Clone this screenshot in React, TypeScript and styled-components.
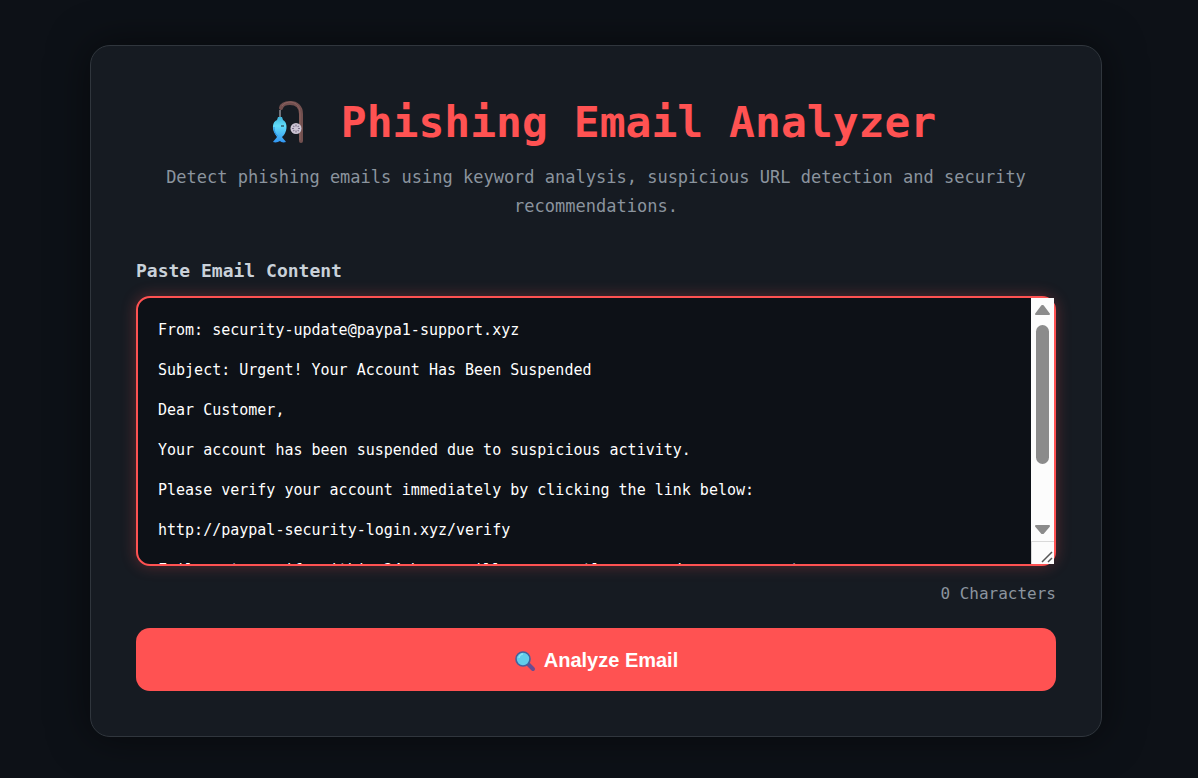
import React, { useState } from "react";
import styled, { createGlobalStyle } from "styled-components";

const GlobalStyle = createGlobalStyle`
  * { box-sizing: border-box; }
  body {
    margin: 0;
    min-height: 100vh;
    background: #0d1117;
    color: #c9d1d9;
    font-family: "DejaVu Sans Mono", "Liberation Mono", monospace;
  }
`;

const Page = styled.main`
  display: flex;
  justify-content: center;
  min-height: 100vh;
  padding: 45px 96px 41px 90px;
`;

const Card = styled.section`
  width: 100%;
  max-width: 1100px;
  padding: 46px 45px 45px;
  background: #161b22;
  border: 1px solid #30363d;
  border-radius: 20px;
  box-shadow: 0 0 40px rgba(0, 0, 0, 0.5);
`;

const Title = styled.h1`
  display: flex;
  align-items: center;
  justify-content: center;
  gap: 32px;
  margin: 0 0 11px;
  color: #ff5252;
  font-size: 43px;
  line-height: 60px;
`;

const Subtitle = styled.p`
  margin: 0 0 36px;
  color: #8b949e;
  font-size: 17px;
  line-height: 29px;
  text-align: center;
`;

const Form = styled.form`
  display: flex;
  flex-direction: column;
`;

const Label = styled.label`
  margin-bottom: 11px;
  font-size: 18px;
  font-weight: 700;
  line-height: 28px;
`;

const Field = styled.div`
  display: flex;
  height: 270px;
  border: 2px solid #ff5252;
  border-radius: 14px;
  background: #0d1117;
  box-shadow: 0 0 15px rgba(255, 82, 82, 0.3);
`;

const EmailInput = styled.textarea`
  flex: 1;
  min-width: 0;
  padding: 22px 20px 0;
  border: 0;
  border-radius: 12px;
  outline: 0;
  resize: none;
  background: transparent;
  color: #fff;
  font-family: inherit;
  font-size: 15px;
  line-height: 20px;
  scrollbar-width: none;
`;

const ScrollBar = styled.div`
  display: flex;
  flex-direction: column;
  align-items: center;
  width: 23px;
  background: #fcfcfc;
`;

const Thumb = styled.div`
  width: 13px;
  height: 139px;
  margin-bottom: auto;
  border-radius: 7px;
  background: #8b8b8b;
`;

const Grip = styled.div`
  width: 23px;
  height: 23px;
  border: solid #d9d9d9;
  border-width: 1px 0 0 1px;
`;

const Counter = styled.output`
  margin: 14px 0 21px;
  color: #8b949e;
  font-size: 16px;
  line-height: 27px;
  text-align: right;
`;

const AnalyzeButton = styled.button`
  display: flex;
  align-items: center;
  justify-content: center;
  gap: 8px;
  height: 63px;
  padding: 2px 0 0;
  border: 0;
  border-radius: 14px;
  background: #ff5252;
  color: #fff;
  font-family: "Liberation Sans", Arial, sans-serif;
  font-size: 20px;
  font-weight: 700;
  cursor: pointer;
`;

const FishingIcon = () => (
  <svg width="53" height="46" viewBox="-10 0 53 46" aria-hidden="true">
    <defs>
      <linearGradient id="fish" x1="0" y1="0" x2="0" y2="1">
        <stop offset="0" stopColor="#3db4dc" />
        <stop offset=".35" stopColor="#62ddfa" />
        <stop offset="1" stopColor="#3195f2" />
      </linearGradient>
    </defs>
    <path d="M14 11V19" stroke="#c9c9d1" strokeWidth="1" />
    <path
      d="M15 9C16 5 20 4 24 4C31 4 35 8 35 15V42"
      fill="none"
      stroke="#72504f"
      strokeWidth="4"
      strokeLinecap="round"
    />
    <path d="M16 7C18 4 21 3 25 3C31 4 34 8 34 15V41" fill="none" stroke="#8c6261" strokeWidth="1" />
    <path
      d="M12 18h4l1 3c4 2 5 9 1 15l-2 2c1 2 3 3 4 5-3 1-5 0-6-1-2 1-4 2-7 1 1-2 3-3 4-5l-2-3c-3-5-3-12 2-14z"
      fill="url(#fish)"
    />
    <path d="M8 28c0 5 2 8 4 9" fill="none" stroke="#278ee8" strokeWidth="1" />
    <path d="M15 27h3" stroke="#315a68" strokeWidth="1.5" />
    <circle cx="30" cy="29.5" r="5.5" fill="#cbc4d3" />
    <path
      d="M30 25.5v2M30 31.5v2M26 29.5h2M32 29.5h2M27.3 26.8l1 1M31.7 31.2l1 1M32.7 26.8l-1 1M28.3 31.2l-1 1"
      stroke="#7b7089"
      strokeWidth="1.1"
    />
  </svg>
);

const SearchIcon = () => (
  <svg width="22" height="22" viewBox="0 0 22 22" aria-hidden="true">
    <path d="M14 14l5 5" stroke="#694d91" strokeWidth="4" strokeLinecap="round" />
    <circle cx="9" cy="9" r="7" fill="#62cdea" stroke="#42629e" strokeWidth="1.6" />
    <path d="M5 8c0-2 2-4 4-4" fill="none" stroke="#8ce4f5" strokeWidth="1.5" />
  </svg>
);

const Arrow = ({ down = false }: { down?: boolean }) => (
  <svg width="23" height={down ? 23 : 27} viewBox={down ? "0 0 23 23" : "0 0 23 27"} aria-hidden="true">
    <path
      d={down ? "M5 8h13L12 15h-1z" : "M5 16h13L12 8h-1z"}
      fill="#8b8b8b"
      stroke="#8b8b8b"
      strokeWidth="2"
      strokeLinejoin="round"
    />
  </svg>
);

const initialEmail = [
  "From: security-update@paypa1-support.xyz",
  "Subject: Urgent! Your Account Has Been Suspended",
  "Dear Customer,",
  "Your account has been suspended due to suspicious activity.",
  "Please verify your account immediately by clicking the link below:",
  "http://paypal-security-login.xyz/verify",
  "Failure to verify within 24 hours will permanently suspend your account.",
].join("\n\n");

export default function App() {
  const [email, setEmail] = useState(initialEmail);
  const [count, setCount] = useState(0);

  return (
    <>
      <GlobalStyle />
      <Page>
        <Card>
          <Title>
            <FishingIcon />
            Phishing Email Analyzer
          </Title>
          <Subtitle>
            Detect phishing emails using keyword analysis, suspicious URL detection and security recommendations.
          </Subtitle>
          <Form onSubmit={(e) => e.preventDefault()}>
            <Label htmlFor="email">Paste Email Content</Label>
            <Field>
              <EmailInput
                id="email"
                value={email}
                spellCheck={false}
                onChange={(e) => {
                  setEmail(e.target.value);
                  setCount(e.target.value.length);
                }}
              />
              <ScrollBar aria-hidden="true">
                <Arrow />
                <Thumb />
                <Arrow down />
                <Grip>
                  <svg width="22" height="22" viewBox="0 0 22 22">
                    <path d="M10 20L20 10M16 20L20 16" stroke="#555" strokeWidth="1.5" />
                  </svg>
                </Grip>
              </ScrollBar>
            </Field>
            <Counter htmlFor="email">{count} Characters</Counter>
            <AnalyzeButton type="submit">
              <SearchIcon />
              Analyze Email
            </AnalyzeButton>
          </Form>
        </Card>
      </Page>
    </>
  );
}
